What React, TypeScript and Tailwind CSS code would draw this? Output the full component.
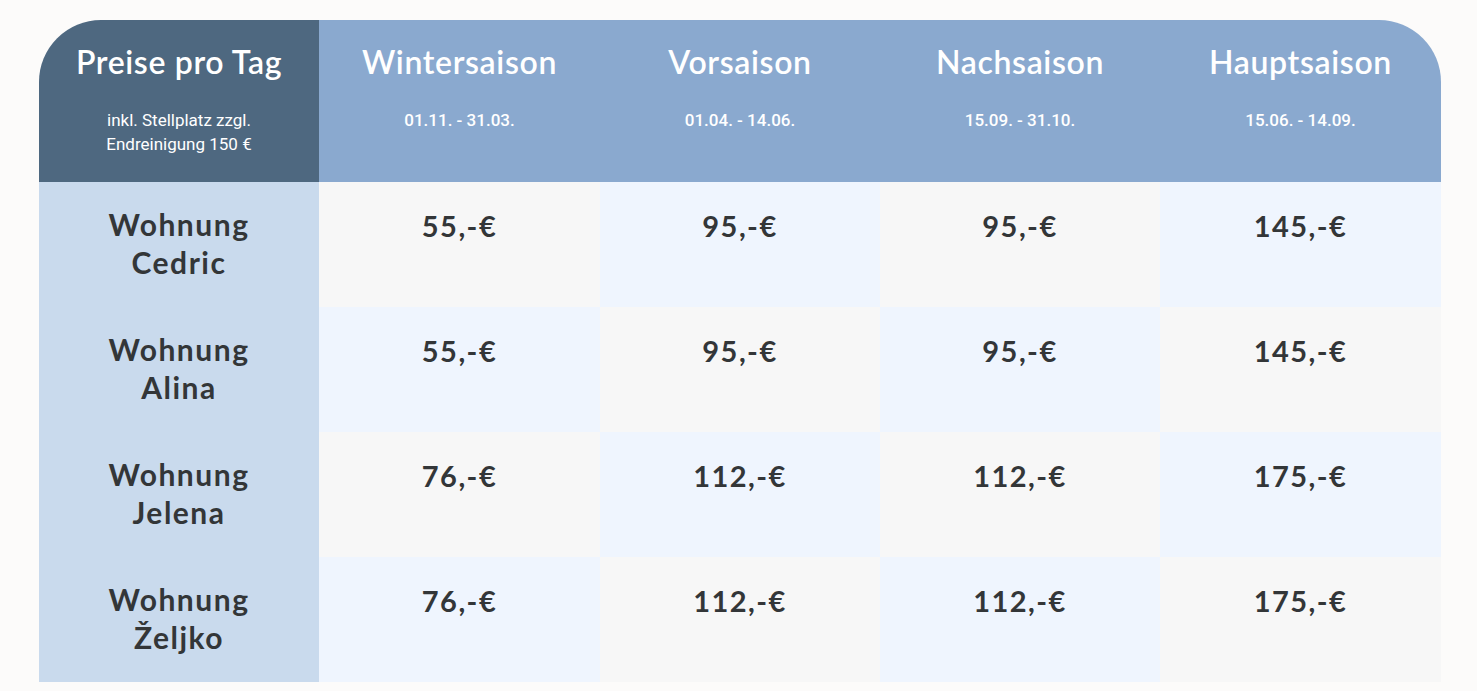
const seasons = [
  { name: 'Wintersaison', dates: '01.11. - 31.03.' },
  { name: 'Vorsaison', dates: '01.04. - 14.06.' },
  { name: 'Nachsaison', dates: '15.09. - 31.10.' },
  { name: 'Hauptsaison', dates: '15.06. - 14.09.' },
]

const rows = [
  { name: 'Cedric', prices: ['55', '95', '95', '145'] },
  { name: 'Alina', prices: ['55', '95', '95', '145'] },
  { name: 'Jelena', prices: ['76', '112', '112', '175'] },
  { name: 'Željko', prices: ['76', '112', '112', '175'] },
]

export default function App() {
  return (
    <div className="min-h-[691px] bg-[#fcfbfa] pt-[20px] pl-[39px] font-['Lato',sans-serif]">
      <div className="w-[1402px] grid grid-cols-[280px_281px_280px_280px_281px] overflow-hidden rounded-t-[62px]">
        {/* header */}
        <div className="h-[162px] bg-[#4e6880] text-white text-center pt-[24px]">
          <div className="text-[32px] leading-[36px] font-semibold tracking-[0.02em]">Preise pro Tag</div>
          <div className="mt-[28px] text-[17px] leading-[24px] font-['Roboto',sans-serif]">
            inkl. Stellplatz zzgl.
            <br />
            Endreinigung 150 €
          </div>
        </div>
        {seasons.map((s) => (
          <div key={s.name} className="h-[162px] bg-[#8aa9cf] text-white text-center pt-[24px]">
            <div className="text-[32px] leading-[36px] font-semibold tracking-[0.02em]">{s.name}</div>
            <div className="mt-[28px] text-[17px] leading-[24px] font-medium font-['Roboto',sans-serif]">
              {s.dates}
            </div>
          </div>
        ))}

        {/* body */}
        {rows.map((r, ri) => (
          <div key={r.name} className="contents">
            <div className="h-[125px] bg-[#c9daed] text-center pt-[23px] text-[30px] leading-[38px] font-bold tracking-[0.05em] text-[#333638]">
              Wohnung
              <br />
              {r.name}
            </div>
            {r.prices.map((p, ci) => (
              <div
                key={ci}
                className={`h-[125px] text-center pt-[25px] text-[29px] leading-[38px] font-bold tracking-[0.05em] text-[#333638] ${
                  (ri + ci) % 2 === 0 ? 'bg-[#f7f7f7]' : 'bg-[#eff5fe]'
                }`}
              >
                {p},-€
              </div>
            ))}
          </div>
        ))}
      </div>
    </div>
  )
}
